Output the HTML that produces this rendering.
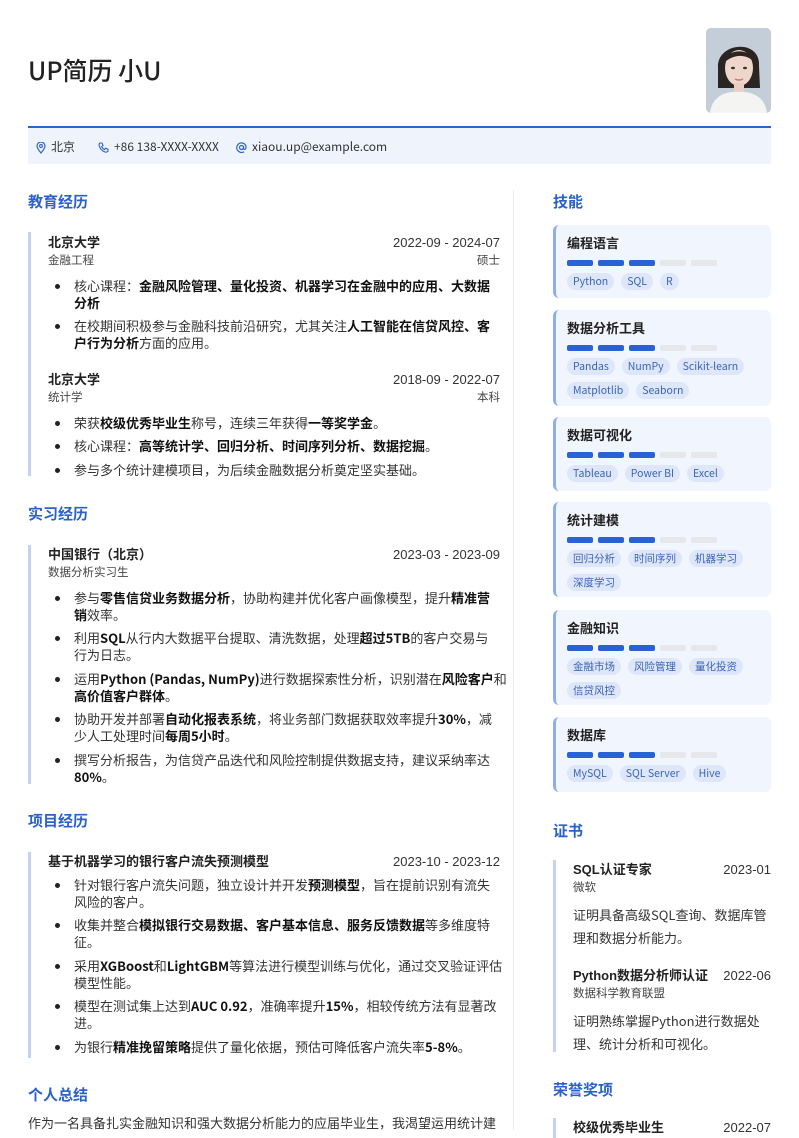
<!DOCTYPE html>
<html><head><meta charset="utf-8">
<style>
*{margin:0;padding:0;box-sizing:border-box}
body{width:799px;height:1130px;overflow:hidden;background:#fff;font-family:"Liberation Sans","Noto Sans CJK SC",sans-serif;color:#222;position:relative}
.abs{position:absolute}
h1{position:absolute;left:28px;top:52px;font-size:25px;font-weight:500;color:#222;font-family:"Noto Sans CJK SC",sans-serif}
.photo{position:absolute;left:706px;top:28px;width:65px;height:85px;border-radius:5px;overflow:hidden;background:linear-gradient(#b9c6d3,#d6dde5)}
.bar{position:absolute;left:28px;top:126px;width:743px;height:2px;background:#2d63cc}
.contact{position:absolute;left:28px;top:128px;width:743px;height:36px;background:#eff4fc;font-size:12px;color:#333;font-family:"Noto Sans CJK SC",sans-serif}
.contact span{position:absolute;top:12px;line-height:14px}
.contact svg{position:absolute;top:14px}
.st{position:absolute;font-size:15px;font-weight:bold;color:#2a62c9;font-family:"Noto Sans CJK SC",sans-serif;line-height:18px}
.blk{position:absolute;border-left:3px solid #c3d3f1}
.row{position:relative;height:19px;font-size:13px;line-height:19px}
.row b{font-weight:bold}
.row .d{position:absolute;right:0;top:0;font-weight:normal;color:#333}
.sub{position:relative;font-size:11.5px;color:#444;line-height:16px;height:17px;margin-top:1px}
.sub .d{position:absolute;right:0;top:0}
ul{list-style:none;margin-right:-30px}
li{position:relative;padding-left:26px;font-size:13px;line-height:17px;margin-top:6.5px;color:#333;white-space:nowrap;font-family:"Noto Sans CJK SC",sans-serif}
li:before{content:"";position:absolute;left:7px;top:7px;width:5px;height:5px;border-radius:50%;background:#222}
li b{color:#111}
.vd{position:absolute;left:513px;top:190px;width:1px;height:940px;background:#ececec}
.card{position:absolute;left:553px;width:218px;background:#f1f5fd;border-left:3px solid #8eaee6;border-radius:6px;padding:9px 0 0 11px}
.card .t{font-size:13px;font-weight:bold;line-height:18px;color:#222;font-family:"Noto Sans CJK SC",sans-serif}
.bars{margin-top:8px;height:6px;display:flex;gap:5px}
.bars i{width:26px;height:6px;border-radius:2px;background:#2a62d4}
.bars i.e{background:#e5e7eb}
.tags{display:flex;flex-wrap:wrap;gap:7px 7px;margin-top:7px;width:200px}
.tags span{font-size:10.5px;color:#3c64b4;background:#dde7f9;border-radius:9px;padding:0 6px;height:17px;line-height:17px;font-family:"Noto Sans CJK SC",sans-serif}
.cert .row{font-size:13px}
.desc{font-size:13px;line-height:23px;color:#333;margin-top:6px;white-space:nowrap;font-family:"Noto Sans CJK SC",sans-serif}
</style></head><body>
<h1>UP简历 小U</h1>
<div class="photo">
<svg width="65" height="85" viewBox="0 0 65 85">
<rect width="65" height="85" fill="#c3ced9"/>
<path d="M12 40 C10 14 55 10 53 38 L54 60 L12 60Z" fill="#2a2522"/>
<ellipse cx="33" cy="40" rx="14" ry="18" fill="#efd6cb"/>
<path d="M19 34 C20 20 46 20 47 33 C40 26 28 26 19 34Z" fill="#2a2522"/>
<rect x="28" y="55" width="10" height="10" fill="#ebcfc3"/>
<path d="M4 85 C6 68 20 63 32 64 C45 63 59 68 61 85Z" fill="#f4f4f2"/>
<ellipse cx="27" cy="40" rx="2" ry="1.2" fill="#333"/><ellipse cx="39" cy="40" rx="2" ry="1.2" fill="#333"/>
<path d="M29 51 Q33 53 37 51" stroke="#c77" stroke-width="1.5" fill="none"/>
</svg></div>
<div class="bar"></div>
<div class="contact">
<svg style="left:8px" width="10" height="12" viewBox="0 0 10 12"><path d="M5 11 C2 7.5 1 5.5 1 4 A4 4 0 0 1 9 4 C9 5.5 8 7.5 5 11Z" fill="none" stroke="#2d63cc" stroke-width="1.2"/><circle cx="5" cy="4" r="1.4" fill="none" stroke="#2d63cc" stroke-width="1.1"/></svg>
<span style="left:23px">北京</span>
<svg style="left:70px" width="11" height="11" viewBox="0 0 11 11"><path d="M2 1 L4 1 L5 3.5 L3.6 4.6 Q5 7 6.6 7.6 L7.6 6.2 L10 7.2 L10 9.2 Q9 10.5 7 10 Q2 8 1 3 Q1 1.5 2 1Z" fill="none" stroke="#2d63cc" stroke-width="1.1"/></svg>
<span style="left:86px">+86 138-XXXX-XXXX</span>
<svg style="left:208px" width="11" height="11" viewBox="0 0 11 11"><circle cx="5.5" cy="5.5" r="2" fill="none" stroke="#2d63cc" stroke-width="1.2"/><path d="M7.5 4 L7.5 6.5 Q8 8 9.5 7 Q10.6 5 9.5 3 A4.8 4.8 0 1 0 8 9.8" fill="none" stroke="#2d63cc" stroke-width="1.2"/></svg>
<span style="left:224px">xiaou.up@example.com</span>
</div>

<div class="vd"></div>

<!-- LEFT -->
<div class="st" style="left:28px;top:193px">教育经历</div>
<div class="blk" style="left:28px;top:232px;width:472px;height:244px;padding-left:17px">
 <div class="row" style="margin-top:1px"><b>北京大学</b><span class="d">2022-09 - 2024-07</span></div>
 <div class="sub">金融工程<span class="d">硕士</span></div>
 <ul>
 <li>核心课程：<b>金融风险管理、量化投资、机器学习在金融中的应用、大数据<br>分析</b></li>
 <li>在校期间积极参与金融科技前沿研究，尤其关注<b>人工智能在信贷风控、客<br>户行为分析</b>方面的应用。</li>
 </ul>
 <div class="row" style="margin-top:19px"><b>北京大学</b><span class="d">2018-09 - 2022-07</span></div>
 <div class="sub">统计学<span class="d">本科</span></div>
 <ul>
 <li>荣获<b>校级优秀毕业生</b>称号，连续三年获得<b>一等奖学金</b>。</li>
 <li>核心课程：<b>高等统计学、回归分析、时间序列分析、数据挖掘</b>。</li>
 <li>参与多个统计建模项目，为后续金融数据分析奠定坚实基础。</li>
 </ul>
</div>

<div class="st" style="left:28px;top:505px">实习经历</div>
<div class="blk" style="left:28px;top:545px;width:472px;height:239px;padding-left:17px">
 <div class="row"><b>中国银行（北京）</b><span class="d">2023-03 - 2023-09</span></div>
 <div class="sub">数据分析实习生</div>
 <ul>
 <li>参与<b>零售信贷业务数据分析</b>，协助构建并优化客户画像模型，提升<b>精准营<br>销</b>效率。</li>
 <li>利用<b>SQL</b>从行内大数据平台提取、清洗数据，处理<b>超过5TB</b>的客户交易与<br>行为日志。</li>
 <li>运用<b>Python (Pandas, NumPy)</b>进行数据探索性分析，识别潜在<b>风险客户</b>和<br><b>高价值客户群体</b>。</li>
 <li>协助开发并部署<b>自动化报表系统</b>，将业务部门数据获取效率提升<b>30%</b>，减<br>少人工处理时间<b>每周5小时</b>。</li>
 <li>撰写分析报告，为信贷产品迭代和风险控制提供数据支持，建议采纳率达<br><b>80%</b>。</li>
 </ul>
</div>

<div class="st" style="left:28px;top:812px">项目经历</div>
<div class="blk" style="left:28px;top:852px;width:472px;height:206px;padding-left:17px">
 <div class="row"><b>基于机器学习的银行客户流失预测模型</b><span class="d">2023-10 - 2023-12</span></div>
 <ul style="margin-top:-2px">
 <li>针对银行客户流失问题，独立设计并开发<b>预测模型</b>，旨在提前识别有流失<br>风险的客户。</li>
 <li>收集并整合<b>模拟银行交易数据、客户基本信息、服务反馈数据</b>等多维度特<br>征。</li>
 <li>采用<b>XGBoost</b>和<b>LightGBM</b>等算法进行模型训练与优化，通过交叉验证评估<br>模型性能。</li>
 <li>模型在测试集上达到<b>AUC 0.92</b>，准确率提升<b>15%</b>，相较传统方法有显著改<br>进。</li>
 <li>为银行<b>精准挽留策略</b>提供了量化依据，预估可降低客户流失率<b>5-8%</b>。</li>
 </ul>
</div>

<div class="st" style="left:28px;top:1086px">个人总结</div>
<div class="abs" style="left:28px;top:1113px;font-size:13px;line-height:20px;color:#333;white-space:nowrap;font-family:'Noto Sans CJK SC',sans-serif">作为一名具备扎实金融知识和强大数据分析能力的应届毕业生，我渴望运用统计建</div>

<!-- RIGHT -->
<div class="st" style="left:553px;top:193px">技能</div>
<div class="card" style="top:225px;height:73px"><div class="t">编程语言</div><div class="bars"><i></i><i></i><i></i><i class="e"></i><i class="e"></i></div><div class="tags"><span>Python</span><span>SQL</span><span>R</span></div></div>
<div class="card" style="top:310px;height:96px"><div class="t">数据分析工具</div><div class="bars"><i></i><i></i><i></i><i class="e"></i><i class="e"></i></div><div class="tags"><span>Pandas</span><span>NumPy</span><span>Scikit-learn</span><span>Matplotlib</span><span>Seaborn</span></div></div>
<div class="card" style="top:417px;height:74px"><div class="t">数据可视化</div><div class="bars"><i></i><i></i><i></i><i class="e"></i><i class="e"></i></div><div class="tags"><span>Tableau</span><span>Power BI</span><span>Excel</span></div></div>
<div class="card" style="top:502px;height:95px"><div class="t">统计建模</div><div class="bars"><i></i><i></i><i></i><i class="e"></i><i class="e"></i></div><div class="tags"><span>回归分析</span><span>时间序列</span><span>机器学习</span><span>深度学习</span></div></div>
<div class="card" style="top:610px;height:95px"><div class="t">金融知识</div><div class="bars"><i></i><i></i><i></i><i class="e"></i><i class="e"></i></div><div class="tags"><span>金融市场</span><span>风险管理</span><span>量化投资</span><span>信贷风控</span></div></div>
<div class="card" style="top:717px;height:75px"><div class="t">数据库</div><div class="bars"><i></i><i></i><i></i><i class="e"></i><i class="e"></i></div><div class="tags"><span>MySQL</span><span>SQL Server</span><span>Hive</span></div></div>

<div class="st" style="left:553px;top:822px">证书</div>
<div class="blk cert" style="left:553px;top:860px;width:218px;height:192px;padding-left:17px">
 <div class="row"><b>SQL认证专家</b><span class="d">2023-01</span></div>
 <div class="sub">微软</div>
 <div class="desc">证明具备高级SQL查询、数据库管<br>理和数据分析能力。</div>
 <div class="row" style="margin-top:17px"><b>Python数据分析师认证</b><span class="d">2022-06</span></div>
 <div class="sub">数据科学教育联盟</div>
 <div class="desc">证明熟练掌握Python进行数据处<br>理、统计分析和可视化。</div>
</div>

<div class="st" style="left:553px;top:1081px">荣誉奖项</div>
<div class="blk cert" style="left:553px;top:1118px;width:218px;height:20px;padding-left:17px">
 <div class="row"><b>校级优秀毕业生</b><span class="d">2022-07</span></div>
</div>
</body></html>
